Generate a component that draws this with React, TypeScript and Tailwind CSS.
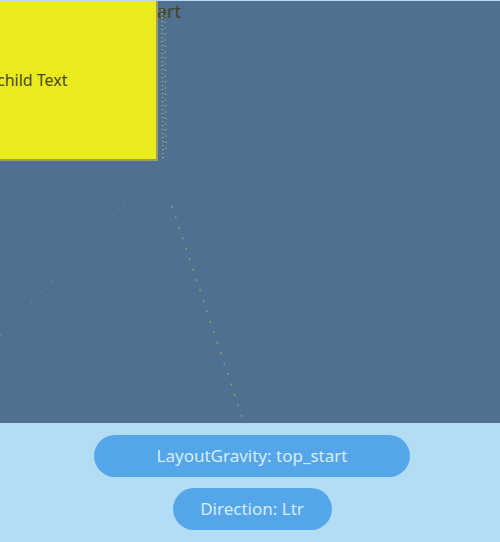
export default function App() {
  return (
    <div className="w-[500px] h-[542px] flex flex-col bg-[#b3dcf5] font-['Noto_Sans',sans-serif]">
      <div className="relative mt-px h-[422px] bg-[#4f7091] overflow-hidden">
        <div className="flex">
          <div className="w-[158px] h-[160px] bg-[#e9eb1e] border-r-2 border-b-2 border-[#9e9d5a] flex items-center overflow-hidden">
            <span className="-ml-[3px] text-[16px] text-[#4a4a1a] whitespace-nowrap">child Text</span>
          </div>
          <span className="-mt-[1px] -ml-[1px] text-[18px] leading-[22px] text-[#45431c]">art</span>
        </div>
        <svg className="absolute inset-0" width="500" height="422" viewBox="0 0 500 422">
          <line x1="162" y1="8" x2="163" y2="158" stroke="#a7a46a" strokeWidth="2" strokeDasharray="1 3" />
          <line x1="165" y1="14" x2="166" y2="150" stroke="#a7a46a" strokeWidth="1" strokeDasharray="2 4" />
          <line x1="155" y1="170" x2="0" y2="335" stroke="#a7a46a" strokeWidth="1" strokeDasharray="1 14" />
          <line x1="172" y1="205" x2="243" y2="419" stroke="#a7a46a" strokeWidth="1.2" strokeDasharray="2 9" />
        </svg>
      </div>
      <div className="flex flex-col items-center gap-[11px] pt-[12px] pl-[4px]">
        <button className="w-[316px] h-[42px] rounded-full bg-[#55a6e8] text-[17px] text-[#d6ecfb]">
          LayoutGravity: top_start
        </button>
        <button className="w-[159px] h-[42px] rounded-full bg-[#55a6e8] text-[17px] text-[#d6ecfb]">
          Direction: Ltr
        </button>
      </div>
    </div>
  )
}
